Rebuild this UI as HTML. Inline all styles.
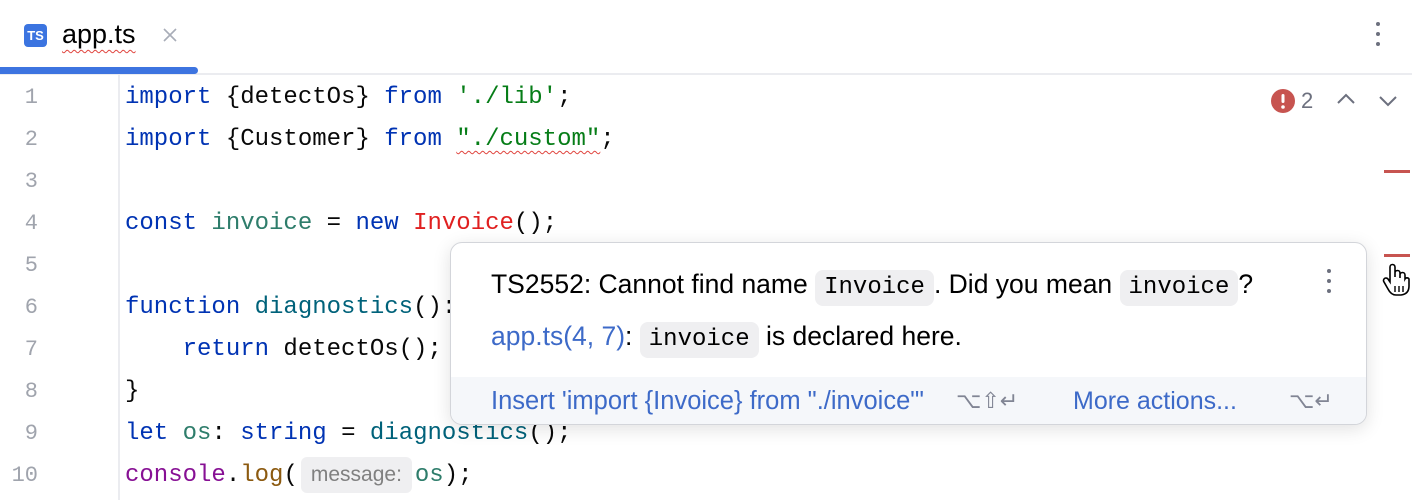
<!DOCTYPE html>
<html><head><meta charset="utf-8"><style>
*{margin:0;padding:0;box-sizing:border-box}
body{width:1412px;height:500px;background:#fff;position:relative;overflow:hidden;font-family:"Liberation Sans",sans-serif}
.tabbar{position:absolute;left:0;top:0;width:1412px;height:75px;border-bottom:2px solid #ebecf0}
.tsicon{position:absolute;left:24px;top:24px;width:23px;height:23px;background:#3b74e0;border-radius:4px;color:#fff;font:bold 13px "Liberation Sans",sans-serif;text-align:center;line-height:23px}
.tabname{position:absolute;left:62px;top:19px;font-size:27px;color:#000;text-decoration:underline wavy #e0443e;text-decoration-thickness:1px;text-underline-offset:6px}
.blue{position:absolute;left:0;top:67px;width:198px;height:7px;background:#3d74e0;border-radius:0 4px 4px 0}
.gut{position:absolute;left:118px;top:75px;width:2px;height:425px;background:#ebecf0}
.ln{position:absolute;left:0;width:38px;text-align:right;font:22px "Liberation Mono",monospace;color:#a0a4ad;height:42px;line-height:42px}
.cl{position:absolute;left:125px;font:24px "Liberation Mono",monospace;color:#080808;height:42px;line-height:42px;white-space:pre}
.k{color:#0033b3}.s{color:#067d17}.v{color:#2e7d6b}.f{color:#00627a}.e{color:#e02020}.p{color:#871094}.m{color:#8c5a10}
.wv{text-decoration:underline wavy #e0443e;text-decoration-thickness:1px;text-underline-offset:5px}
.hint{display:inline-block;background:#efeff1;color:#808080;font:21px "Liberation Sans",sans-serif;border-radius:6px;padding:0 10px;line-height:36px;vertical-align:middle;margin:0 3px}
.pop{position:absolute;left:450px;top:242px;width:917px;height:183px;background:#fff;border:1px solid #d3d5da;border-radius:12px;box-shadow:0 4px 18px rgba(0,0,0,.12);overflow:hidden}
.pt{position:absolute;left:40px;font-size:26.5px;color:#000;white-space:pre;line-height:36px}
.code{display:inline-block;background:#efeff1;border-radius:8px;padding:0 9px;font:24px "Liberation Mono",monospace;line-height:36px}
.lnk{color:#3d6ac8}
.foot{position:absolute;left:0;top:134px;width:917px;height:49px;background:#f5f7fa}
.dots{position:absolute;width:4px}
.dots i{display:block;width:4px;height:4px;border-radius:2px;background:#6c707e;margin-bottom:6px}
</style></head><body>
<div class="tabbar"></div>
<div class="tsicon">TS</div>
<div class="tabname">app.ts</div>
<svg style="position:absolute;left:162px;top:27px" width="16" height="16"><path d="M2 2 L14 14 M14 2 L2 14" stroke="#a8adb8" stroke-width="1.6"/></svg>
<div class="blue"></div>
<div class="dots" style="left:1376px;top:22px"><i></i><i></i><i></i></div>
<div class="gut"></div>

<div class="ln" style="top:77px">1</div>
<div class="ln" style="top:119px">2</div>
<div class="ln" style="top:161px">3</div>
<div class="ln" style="top:203px">4</div>
<div class="ln" style="top:245px">5</div>
<div class="ln" style="top:287px">6</div>
<div class="ln" style="top:329px">7</div>
<div class="ln" style="top:371px">8</div>
<div class="ln" style="top:413px">9</div>
<div class="ln" style="top:455px">10</div>

<div class="cl" style="top:77px"><span class="k">import</span> {detectOs} <span class="k">from</span> <span class="s">'./lib'</span>;</div>
<div class="cl" style="top:119px"><span class="k">import</span> {Customer} <span class="k">from</span> <span class="s wv">"./custom"</span>;</div>
<div class="cl" style="top:203px"><span class="k">const</span> <span class="v">invoice</span> = <span class="k">new</span> <span class="e">Invoice</span>();</div>
<div class="cl" style="top:287px"><span class="k">function</span> <span class="f">diagnostics</span>():</div>
<div class="cl" style="top:329px">    <span class="k">return</span> detectOs();</div>
<div class="cl" style="top:371px">}</div>
<div class="cl" style="top:413px"><span class="k">let</span> <span class="v">os</span>: <span class="k">string</span> = <span class="f">diagnostics</span>();</div>
<div class="cl" style="top:455px"><span class="p">console</span>.<span class="m">log</span>(<span class="hint">message:</span><span class="v">os</span>);</div>

<svg style="position:absolute;left:1270px;top:88px" width="26" height="26"><circle cx="13" cy="13" r="12" fill="#c75450"/><rect x="11.5" y="6" width="3" height="9" rx="1.5" fill="#fff"/><circle cx="13" cy="19" r="1.8" fill="#fff"/></svg>
<div style="position:absolute;left:1301px;top:88px;font-size:22px;color:#6c707e">2</div>
<svg style="position:absolute;left:1336px;top:92px" width="20" height="14"><path d="M2 11 L10 3 L18 11" fill="none" stroke="#6c707e" stroke-width="2"/></svg>
<svg style="position:absolute;left:1378px;top:94px" width="20" height="14"><path d="M2 3 L10 11 L18 3" fill="none" stroke="#6c707e" stroke-width="2"/></svg>
<div style="position:absolute;left:1384px;top:170px;width:26px;height:3px;background:#c75450"></div>
<div style="position:absolute;left:1384px;top:254px;width:26px;height:3px;background:#c75450"></div>
<svg style="position:absolute;left:1382px;top:262px" width="28" height="36"><path d="M8 20 V5 a2.5 2.5 0 0 1 5 0 V15 V11 a2.5 2.5 0 0 1 5 0 V16 V13 a2.5 2.5 0 0 1 5 0 V17 a2.3 2.3 0 0 1 4 0 V24 q0 8 -8 9 H14 q-5 0 -8 -6 L2 20 a2.5 2.5 0 0 1 4 -3 Z" fill="#fff" stroke="#000" stroke-width="1.6"/><path d="M13 24 V30 M17 24 V30 M21 24 V30" stroke="#000" stroke-width="1.4"/></svg>

<div class="pop">
 <div class="pt" style="top:23px">TS2552: Cannot find name <span class="code">Invoice</span>. Did you mean <span class="code">invoice</span>?</div>
 <div class="pt" style="top:75px"><span class="lnk">app.ts(4, 7)</span>: <span class="code">invoice</span> is declared here.</div>
 <div class="dots" style="left:876px;top:26px"><i></i><i></i><i></i></div>
 <div class="foot">
  <div style="position:absolute;left:40px;top:10px;font-size:25.5px;color:#3d6ac8;white-space:pre">Insert 'import {Invoice} from "./invoice"'</div>
  <div style="position:absolute;left:505px;top:11px;font-size:22px;color:#818594">⌥⇧↵</div>
  <div style="position:absolute;left:622px;top:10px;font-size:25px;color:#3d6ac8">More actions...</div>
  <div style="position:absolute;left:838px;top:11px;font-size:22px;color:#818594">⌥↵</div>
 </div>
</div>
</body></html>
